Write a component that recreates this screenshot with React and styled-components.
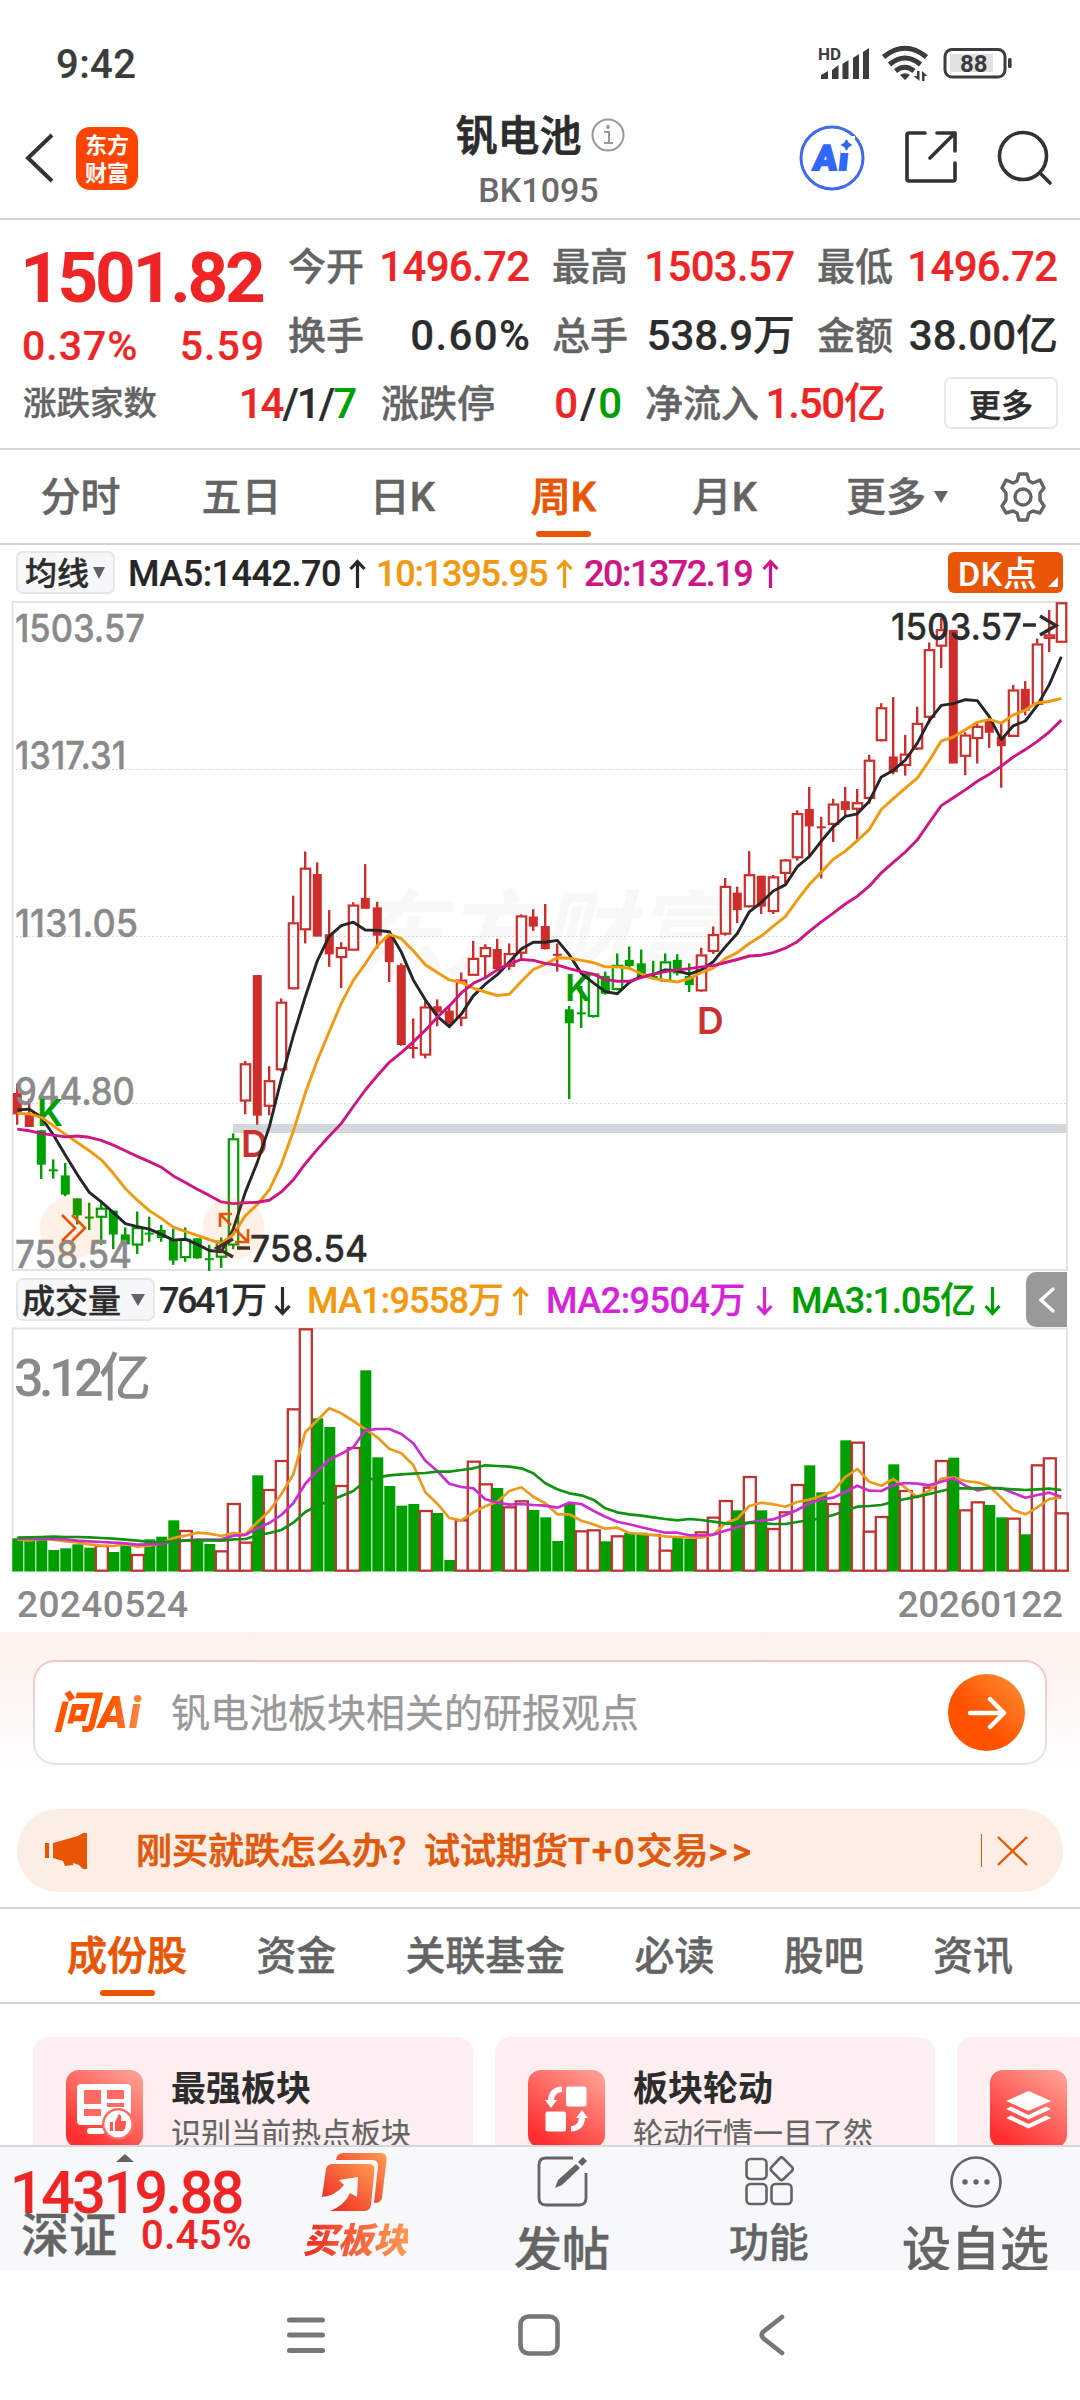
import React from 'react'
import styled, { createGlobalStyle } from 'styled-components'

const colors = {
  red: '#ef2525',
  green: '#009f00',
  ink: '#2c2c2c',
  label: '#646464',
  axis: '#8a8a8a',
  brand: '#e85504',
  ma5: '#262626',
  ma10: '#f2990f',
  ma20: '#cf1583',
  volMa2: '#d722dc',
  volMa3: '#119311',
  candle: '#cd2e2c',
  line: '#d5d5d5',
  frame: '#e3e3e3'
}

const GlobalStyle = createGlobalStyle`
  * {
    box-sizing: border-box;
  }

  body {
    margin: 0;
    background: #fff;
    color: ${colors.ink};
    font-family: Roboto, "Noto Sans CJK SC", sans-serif;
    font-weight: 500;
  }

  svg {
    display: block;
    flex: none;
  }
`

/* chart data: [high, bodyTop, bodyBottom, low, kind], upper case kind = filled body */
const CANDLES = [
  [1115, 1138, 1185, 1210, 'R'], [1150, 1185, 1214, 1214, 'R'], [1222, 1224, 1301, 1335, 'G'],
  [1290, 1314, 1316, 1334, 'G'], [1298, 1328, 1370, 1375, 'G'], [1380, 1381, 1418, 1440, 'G'],
  [1390, 1423, 1423, 1453, 'G'], [1388, 1402, 1423, 1487, 'g'], [1409, 1409, 1462, 1497, 'G'],
  [1447, 1464, 1485, 1487, 'G'], [1410, 1447, 1487, 1508, 'g'], [1422, 1460, 1460, 1480, 'G'],
  [1441, 1454, 1470, 1480, 'G'], [1450, 1477, 1522, 1533, 'G'], [1447, 1474, 1516, 1526, 'g'],
  [1471, 1473, 1517, 1519, 'G'], [1487, 1519, 1519, 1547, 'G'], [1470, 1478, 1515, 1540, 'g'],
  [1230, 1242, 1487, 1497, 'g'], [1063, 1069, 1155, 1186, 'r'], [866, 866, 1188, 1210, 'R'],
  [1075, 1108, 1167, 1188, 'r'], [919, 927, 1083, 1087, 'r'], [682, 744, 896, 898, 'r'],
  [580, 618, 760, 792, 'r'], [605, 633, 775, 776, 'R'], [715, 772, 816, 846, 'R'],
  [789, 801, 824, 895, 'r'], [697, 703, 807, 808, 'r'], [609, 688, 711, 712, 'R'],
  [696, 710, 773, 804, 'R'], [770, 778, 834, 881, 'R'], [838, 843, 1025, 1028, 'R'],
  [965, 1032, 1032, 1057, 'R'], [925, 938, 1049, 1057, 'r'], [921, 938, 950, 983, 'R'],
  [937, 948, 976, 985, 'R'], [859, 876, 964, 983, 'r'], [786, 826, 865, 865, 'r'],
  [794, 801, 822, 870, 'r'], [781, 806, 850, 853, 'R'], [792, 815, 844, 853, 'r'],
  [725, 728, 814, 830, 'r'], [713, 731, 752, 763, 'R'], [701, 753, 804, 806, 'R'],
  [792, 817, 817, 857, 'R'], [936, 945, 975, 1151, 'G'], [890, 952, 952, 987, 'G'],
  [860, 862, 960, 963, 'g'], [857, 868, 907, 910, 'G'], [815, 842, 898, 900, 'g'],
  [799, 831, 843, 848, 'G'], [806, 839, 870, 870, 'G'], [832, 868, 872, 874, 'G'],
  [815, 834, 878, 880, 'g'], [817, 831, 860, 866, 'G'], [838, 868, 887, 904, 'G'],
  [802, 818, 901, 903, 'r'], [753, 771, 810, 816, 'r'], [641, 660, 770, 774, 'r'],
  [661, 676, 714, 745, 'R'], [579, 633, 707, 709, 'r'], [636, 637, 706, 724, 'R'],
  [634, 638, 718, 724, 'r'], [597, 599, 630, 653, 'r'], [485, 492, 594, 601, 'r'],
  [431, 483, 521, 590, 'R'], [500, 523, 523, 642, 'R'], [458, 470, 517, 558, 'r'],
  [431, 465, 483, 500, 'R'], [436, 467, 482, 553, 'r'], [357, 369, 457, 470, 'r'],
  [238, 248, 324, 326, 'r'], [224, 362, 396, 402, 'R'], [311, 355, 381, 405, 'r'],
  [246, 284, 343, 346, 'r'], [98, 114, 270, 285, 'r'], [42, 68, 106, 157, 'r'],
  [70, 70, 376, 376, 'R'], [305, 311, 360, 404, 'r'], [280, 291, 319, 377, 'r'],
  [272, 280, 305, 341, 'R'], [285, 316, 336, 433, 'R'], [196, 207, 314, 316, 'r'],
  [187, 206, 254, 266, 'R'], [89, 101, 240, 241, 'r'], [23, 80, 88, 120, 'r'],
  [5, 6, 97, 97, 'r']
]

const MA5 = [
  1176, 1174, 1193, 1233, 1280, 1325, 1366, 1388, 1413, 1438, 1445, 1451, 1463, 1476, 1474, 1486,
  1500, 1503, 1450, 1366, 1297, 1215, 1105, 1005, 915, 832, 775, 751, 743, 761, 762, 765, 812, 876,
  922, 960, 984, 955, 913, 886, 864, 835, 805, 789, 789, 785, 818, 861, 883, 903, 908, 882, 867,
  864, 853, 855, 863, 853, 834, 800, 769, 719, 697, 671, 657, 615, 592, 556, 523, 499, 493, 464,
  408, 393, 369, 330, 278, 243, 239, 230, 232, 269, 322, 290, 279, 243, 195, 131
]

const MA10 = [
  1184, 1185, 1193, 1212, 1232, 1251, 1270, 1291, 1322, 1357, 1384, 1408, 1426, 1446, 1456, 1465,
  1475, 1484, 1463, 1420, 1394, 1360, 1302, 1225, 1137, 1062, 995, 930, 877, 839, 797, 771, 781,
  809, 841, 859, 876, 882, 895, 904, 912, 909, 880, 852, 840, 825, 826, 831, 836, 846, 846, 849,
  862, 873, 877, 881, 873, 859, 849, 827, 813, 792, 775, 752, 730, 692, 656, 627, 598, 579, 555,
  529, 483, 458, 434, 411, 370, 325, 316, 299, 282, 275, 284, 265, 254, 237, 234, 227
]

const MA20 = [
  1220, 1224, 1230, 1234, 1238, 1236, 1239, 1246, 1257, 1270, 1283, 1295, 1308, 1328, 1343, 1359,
  1373, 1388, 1392, 1390, 1389, 1384, 1365, 1337, 1300, 1267, 1236, 1207, 1168, 1130, 1097, 1066,
  1044, 1019, 992, 962, 936, 906, 884, 871, 853, 839, 829, 831, 838, 842, 850, 857, 863, 875, 879,
  879, 871, 863, 857, 853, 850, 846, 843, 836, 829, 821, 819, 813, 803, 788, 764, 742, 722, 701,
  683, 660, 629, 605, 581, 553, 513, 474, 456, 438, 418, 402, 383, 362, 345, 326, 304, 277
]

const VOLUMES = [
  820, 828, 825, 855, 850, 838, 848, 840, 861, 843, 867, 823, 815, 766, 795, 828, 837, 856, 714,
  830, 631, 672, 585, 430, 190, 460, 486, 660, 546, 316, 577, 663, 722, 717, 735, 744, 885, 763,
  587, 655, 669, 724, 706, 735, 757, 828, 717, 796, 793, 829, 811, 803, 803, 807, 854, 818, 822,
  799, 755, 705, 736, 633, 736, 789, 739, 657, 601, 682, 714, 526, 530, 797, 753, 598, 675, 690,
  665, 585, 578, 733, 709, 720, 757, 758, 808, 598, 577, 742
]

const VOLUME_KINDS =
  'gggggggrggrgggrggrrrgrrrrggrrggggg' +
  'rggrrrgrrgggg' +
  'rrgrggrrggrrrgrgrrrggrgrrrgrrrrgrrggrgrrr'

const VOL_MA1 = [
  824, 826, 822, 824, 829, 832, 838, 842, 843, 838, 845, 842, 835, 819, 812, 803, 806, 813, 804,
  808, 772, 738, 688, 628, 502, 466, 430, 445, 468, 492, 517, 551, 565, 600, 682, 716, 759, 766,
  742, 724, 710, 678, 667, 695, 715, 748, 748, 767, 778, 791, 788, 804, 807, 810, 814, 816, 818,
  818, 809, 775, 761, 723, 713, 718, 725, 711, 704, 692, 678, 636, 612, 650, 662, 642, 668, 697,
  677, 641, 637, 648, 652, 664, 698, 735, 748, 727, 702, 697
]

const VOL_MA2 = [
  822, 822, 821, 822, 823, 827, 829, 831, 833, 835, 839, 838, 837, 829, 826, 824, 824, 823, 812,
  810, 790, 774, 750, 715, 656, 618, 584, 566, 547, 496, 492, 492, 507, 535, 587, 618, 656, 666,
  670, 703, 713, 719, 717, 720, 722, 728, 713, 717, 737, 755, 770, 778, 787, 795, 803, 803, 811,
  811, 809, 797, 787, 772, 767, 763, 750, 735, 715, 703, 698, 681, 662, 677, 678, 661, 654, 656,
  661, 650, 640, 662, 676, 669, 669, 684, 698, 690, 683, 695
]

const VOL_MA3 = [
  818, 817, 816, 815, 816, 816, 817, 819, 821, 824, 827, 831, 831, 829, 827, 826, 826, 827, 823,
  822, 811, 804, 795, 773, 741, 722, 708, 693, 678, 648, 637, 631, 628, 626, 624, 620, 620, 615,
  610, 601, 603, 605, 610, 625, 655, 673, 685, 691, 704, 730, 742, 748, 752, 757, 762, 766, 762,
  765, 770, 775, 776, 773, 774, 777, 777, 771, 765, 760, 750, 738, 725, 723, 720, 710, 702, 695,
  687, 678, 670, 670, 670, 669, 671, 673, 675, 673, 671, 675
]

const cx = i => 17.3 + i * 12
const priceY = v => v / 2.306
const volY = v => v / 3 - 62
const points = (series, toY) => series.map((v, i) => `${cx(i)},${toY(v).toFixed(1)}`).join(' ')

const Page = styled.main`
  width: 1080px;
  height: 2400px;
  overflow: hidden;
  display: flex;
  flex-direction: column;
  background: #fff;
`

const Text = styled.span`
  padding-top: 3px;
  margin-left: ${p => p.$shift || 0}px;
  margin-right: ${p => -(p.$track || 0)}px;
  font-size: ${p => p.$size}px;
  font-weight: ${p => p.$weight || 500};
  color: ${p => p.$color || colors.ink};
  letter-spacing: ${p => p.$track || 0}px;
  -webkit-text-stroke: ${p => p.$stroke === undefined ? 0.2 : p.$stroke}px;
  line-height: 1;
  white-space: nowrap;
`

const Tint = styled.span`
  color: ${p => p.$color};
`

const Latin = styled.span`
  letter-spacing: ${p => p.$track}px;
`

const Caret = styled.i`
  width: 0;
  height: 0;
  border: solid transparent;
  border-width: 0 ${p => p.$w / 2}px;
  ${p => p.$up ? 'border-bottom' : 'border-top'}: ${p => p.$h}px solid #636363;
`

/* status bar and header */

const StatusBar = styled.div`
  height: 106px;
  padding: 20px 65px 0 56px;
  display: flex;
  align-items: center;
  justify-content: space-between;
`

const Header = styled.header`
  height: 114px;
  padding: 0 27px 8px 22px;
  display: grid;
  grid-template-columns: 1fr auto 1fr;
  align-items: center;
  border-bottom: 2px solid ${colors.line};
`

const HeaderSide = styled.div`
  display: flex;
  align-items: center;
  gap: ${p => p.$gap}px;
  justify-content: ${p => p.$end ? 'flex-end' : 'flex-start'};
`

const Logo = styled.div`
  width: 62px;
  height: 63px;
  border-radius: 14px;
  background: #ff4400;
  color: #fff;
  font: 700 22px/28px "Noto Sans CJK SC", sans-serif;
  text-align: center;
  padding: 2px 8px;
`

const TitleBlock = styled.div`
  display: flex;
  flex-direction: column;
  align-items: center;
  gap: 12px;
  padding-top: 3px;
`

const TitleLine = styled.div`
  display: flex;
  align-items: center;
  gap: 9px;
  padding-left: 5px;
`

/* quote */

const Quote = styled.section`
  height: 230px;
  padding: 11px 22px 0 24px;
  border-bottom: 2px solid ${colors.line};
`

const QuoteGrid = styled.div`
  display: grid;
  grid-template-columns: 242px 241px 242px 240px;
  column-gap: 23px;
`

const PriceBlock = styled.div`
  grid-row: span 2;
  width: 240px;
  height: 138px;
  display: grid;
  grid-template-columns: 240px;
  grid-template-rows: 89px 49px;
  align-items: center;
`

const Spread = styled.div`
  display: flex;
  align-items: center;
  justify-content: space-between;
  height: ${p => p.$h || 69}px;
  width: ${p => p.$w ? p.$w + 'px' : 'auto'};
`

const BreadthRow = styled.div`
  display: flex;
  align-items: center;
  gap: 25px;
  height: 67px;
`

const MoreButton = styled.button`
  width: 114px;
  height: 52px;
  margin-left: auto;
  padding: 0;
  border: 2px solid #e6e8e9;
  border-radius: 7px;
  background: #fff;
  font: 500 32px/1 "Noto Sans CJK SC", sans-serif;
  color: ${colors.ink};
  -webkit-text-stroke: 0.5px;
`

/* tabs */

const PeriodTabs = styled.nav`
  height: 95px;
  display: flex;
  align-items: center;
  border-bottom: 2px solid ${colors.line};
`

const Tab = styled.div`
  position: relative;
  width: ${p => p.$w ? p.$w + 'px' : 'auto'};
  height: 93px;
  padding-top: 3px;
  display: flex;
  align-items: center;
  justify-content: center;
  font-size: 40px;
  line-height: 1;
  color: ${p => p.$active ? colors.brand : colors.label};
  -webkit-text-stroke: ${p => p.$active ? 0.8 : 0.4}px;

  &::after {
    content: '';
    display: ${p => p.$active ? 'block' : 'none'};
    position: absolute;
    bottom: 6px;
    width: 55px;
    height: 6px;
    border-radius: 3px;
    background: ${colors.brand};
  }
`

const MoreTab = styled.div`
  display: flex;
  align-items: center;
  gap: 8px;
  margin: 0 51px 0 41px;
`

/* indicator rows */

const IndicatorRow = styled.div`
  height: 55px;
  display: flex;
  align-items: center;
  padding: 0 ${p => p.$right}px 0 ${p => p.$left}px;
`

const Chip = styled.div`
  width: ${p => p.$w}px;
  height: 43px;
  display: flex;
  align-items: center;
  justify-content: space-between;
  padding: 0 8px 0 ${p => p.$pad}px;
  margin-right: ${p => p.$gap}px;
  border: 2px solid #e5e7ea;
  border-radius: 7px;
  background: #f6f7f9;
`

const Reading = styled.div`
  display: flex;
  align-items: center;
  justify-content: space-between;
  width: ${p => p.$w}px;
  margin-right: ${p => p.$gap}px;
`

const DkButton = styled.div`
  position: relative;
  width: 115px;
  height: 41px;
  margin-left: auto;
  padding-left: 11px;
  display: flex;
  align-items: center;
  border-radius: 6px;
  background: ${colors.brand};

  &::after {
    content: '';
    position: absolute;
    right: 5px;
    bottom: 6px;
    border-left: 10px solid transparent;
    border-bottom: 10px solid #fff;
  }
`

const Collapse = styled.div`
  width: 41px;
  height: 55px;
  margin-left: auto;
  display: flex;
  align-items: center;
  justify-content: center;
  border-radius: 10px 0 0 10px;
  background: #999;
`

const DateRow = styled.div`
  height: 59px;
  display: flex;
  align-items: center;
  justify-content: space-between;
  padding: 0 17px;
`

/* ask box and banner */

const AskSection = styled.section`
  height: 175px;
  padding: 28px 33px 0;
  background: linear-gradient(#fef1ec, #fff 86%);
`

const AskBox = styled.div`
  height: 105px;
  display: flex;
  align-items: center;
  padding: 0 20px 0 18px;
  border: 2px solid transparent;
  border-radius: 22px;
  background:
    linear-gradient(#fff, #fff) padding-box,
    linear-gradient(#f7c5bb, #dfe6ee) border-box;
`

const AskLogo = styled.div`
  width: 98px;
  margin-right: 20px;
  font: italic 900 44px/50px Roboto, "Noto Sans CJK SC", sans-serif;
  letter-spacing: 1.5px;
  white-space: nowrap;
  color: transparent;
  background: linear-gradient(100deg, #ff5500 55%, #ff9a60);
  background-clip: text;
`

const SendButton = styled.div`
  width: 77px;
  height: 77px;
  margin-left: auto;
  display: flex;
  align-items: center;
  justify-content: center;
  border-radius: 50%;
  background: linear-gradient(45deg, #ff5200 40%, #ff9036);
`

const Banner = styled.div`
  height: 83px;
  margin: 2px 17px 15px;
  padding: 0 35px 0 28px;
  display: flex;
  align-items: center;
  border-radius: 41px;
  background: #fceee5;
`

const Divider = styled.i`
  width: 1px;
  height: 33px;
  margin: 0 15px 0 auto;
  background: ${colors.brand};
`

/* content tabs and cards */

const SectionTabs = styled.nav`
  height: 97px;
  display: flex;
  justify-content: space-between;
  padding: 0 67px;
  border-top: 2px solid ${colors.line};
  border-bottom: 2px solid ${colors.line};
`

const CardStrip = styled.section`
  height: 141px;
  overflow: hidden;
  display: flex;
  gap: 22px;
  padding: 33px 0 0 33px;
`

const Card = styled.article`
  flex: none;
  width: 440px;
  height: 150px;
  display: flex;
  gap: 28px;
  padding: 32px 33px;
  border-radius: 16px;
  background: #fdeff0;
`

const CardIcon = styled.div`
  width: 77px;
  height: 78px;
  margin-top: 1px;
  border-radius: 13px;
  background: linear-gradient(35deg, #ff2f2f 15%, #ff9a8e 90%);
`

const CardText = styled.div`
  display: flex;
  flex-direction: column;
  gap: 9px;
`

/* bottom bars */

const BottomBar = styled.footer`
  height: 125px;
  overflow: hidden;
  display: flex;
  padding-right: 1px;
  border-top: 2px solid #d6d8dd;
  background: #f6f8fa;
`

const IndexTicker = styled.div`
  width: 252px;
  padding: 7px 0 0 10px;
  display: flex;
  flex-direction: column;
`

const IndexRow = styled.div`
  height: ${p => p.$h}px;
  display: flex;
  align-items: center;
  gap: 24px;
  padding-left: ${p => p.$pad || 0}px;
`

const Action = styled.div`
  flex: 1;
  display: flex;
  flex-direction: column;
  align-items: center;
  padding-top: 5px;
`

const ActionLabel = styled.span`
  flex: none;
  font-size: ${p => p.$size}px;
  line-height: ${p => p.$lh}px;
  color: ${colors.label};
  -webkit-text-stroke: 0.4px;
  white-space: nowrap;
`

const BuyLabel = styled(ActionLabel)`
  font-weight: 900;
  font-style: italic;
  color: transparent;
  background: linear-gradient(90deg, #ee2b24, #ff9a52);
  background-clip: text;
  -webkit-text-stroke: 0;
`

const SystemNav = styled.div`
  height: 130px;
  display: flex;
  align-items: center;
  padding-left: 287px;
`

const HomeIcon = styled.svg`
  margin: 0 199px 0 193px;
`

const StatusIcons = () => (
  <svg width="200" height="40" viewBox="815 43 200 40" fill="#3c3c3c">
    <text x="818" y="59.500" fontSize="17" fontWeight="700">HD</text>
    <path d="M821 79V75L828 71V79ZM832 79V70L838.500 65V79ZM842.500 79V64L848.500 60V79ZM853 79V58L859 54V79ZM863 79V52L869 48V79Z" />
    <g fill="none" stroke="#3c3c3c" strokeWidth="5">
      <path d="M883.500 57Q905 39.500 926.500 57" />
      <path d="M889.500 64.500Q905 51.500 920.500 64.500" />
      <path d="M895.500 71Q905 63.500 914 71" />
    </g>
    <path d="M900 75Q905 71.500 910 75L905 80ZM917 71H919.500V81L913.500 76H917ZM922 81H924.500V76H927.500L922 71Z" />
    <rect x="950" y="54" width="43" height="18" fill="#e2e2e2" />
    <rect x="945" y="49.500" width="60" height="27.500" rx="7" fill="none" stroke="#3c3c3c" strokeWidth="3" />
    <rect x="1008" y="58" width="3.600" height="10" rx="1.500" />
    <text x="960" y="71.500" fontSize="24" fontWeight="700">88</text>
  </svg>
)

const AiIcon = () => (
  <svg width="66" height="66" viewBox="0 0 66 66">
    <circle cx="33" cy="33" r="31" fill="none" stroke="#3f69f0" strokeWidth="3" />
    <g transform="skewX(-6)" fill="#3166ff">
      <text x="18" y="45" fontSize="35" fontWeight="900" stroke="#3166ff" strokeWidth="2" textLength="35">Ai</text>
    </g>
    <rect x="42" y="11" width="14" height="17" fill="#fff" />
    <path d="M47.500 15Q48.500 19 52.500 20Q48.500 21 47.500 25Q46.500 21 42.500 20Q46.500 19 47.500 15Z" fill="#3166ff" stroke="#3166ff" strokeWidth="1.500" />
  </svg>
)

const Arrow = ({ color, down }) => (
  <svg width="17" height="32" viewBox="0 -2 17 32" fill="none" stroke={color} strokeWidth="3.200">
    <path d={down ? 'M8.500 1V28M1.500 20L8.500 27.500L15.500 20' : 'M8.500 29V2M1.500 10L8.500 2.500L15.500 10'} />
  </svg>
)

const Candle = ({ i, bar }) => {
  const [high, top, bottom, low, kind] = bar
  const filled = kind === kind.toUpperCase()
  const color = kind.toLowerCase() === 'g' ? colors.green : colors.candle
  const x = cx(i)
  const y1 = priceY(top)
  const y2 = priceY(bottom)

  return (
    <g fill={color}>
      <rect x={x - 1.3} y={priceY(high)} width="2.400" height={y1 - priceY(high)} />
      <rect x={x - 1.3} y={y2} width="2.400" height={Math.max(priceY(low) - y2, 0)} />
      {filled
        ? <rect x={x - 4.5} y={y1 - 0.5} width="9" height={Math.max(y2 - y1 + 1, 2)} />
        : <rect x={x - 4.5} y={y1 + 0.7} width="9.400" height={Math.max(y2 - y1 - 1, 1)} fill="none" stroke={color} strokeWidth="2.200" />}
    </g>
  )
}

const PRICE_LABELS = [
  ['1503.57', 641.5, 130],
  ['1317.31', 769, 111],
  ['1131.05', 937, 123],
  ['944.80', 1104.5, 120],
  ['758.54', 1267.5, 117]
]

const PriceChart = () => (
  <svg width="1080" height="672" fontFamily='Inter, "Noto Sans CJK SC", sans-serif' fontWeight="500">
    <text x="350" y="369" fontSize="94" fontWeight="700" fontStyle="italic" fill="#f8f8f8" fontFamily='"Noto Sans CJK SC", sans-serif'>东方财富</text>
    <g stroke="#dadada" strokeDasharray="2 2">
      <path d="M12 169.500H1067M12 336.500H1067M12 503.500H1067" />
    </g>
    <rect x="12.500" y="2" width="1054.500" height="668" fill="none" stroke={colors.frame} strokeWidth="2" />
    <rect x="233" y="524" width="834" height="9" fill="#d3d7db" />
    {CANDLES.map((bar, i) => <Candle key={i} i={i} bar={bar} />)}
    <g fontSize="38" fill={colors.axis} stroke={colors.axis} strokeWidth="0.400">
      {PRICE_LABELS.map(([label, y, w]) => (
        <text key={label} x="15" y={y - 600} textLength={w} lengthAdjust="spacingAndGlyphs">{label}</text>
      ))}
    </g>
    <g fontSize="37" fontWeight="600">
      <text x="37" y="526" fill={colors.green}>K</text>
      <text x="565" y="401" fill={colors.green}>K</text>
      <text x="241" y="556.500" fill="#c93030">D</text>
      <text x="697" y="434" fill="#c93030">D</text>
    </g>
    <g fill="none" strokeWidth="2.900" strokeLinejoin="round">
      <polyline points={points(MA5, priceY)} stroke={colors.ma5} />
      <polyline points={points(MA10, priceY)} stroke={colors.ma10} />
      <polyline points={points(MA20, priceY)} stroke={colors.ma20} />
    </g>
    <g fontSize="37" fill={colors.ink} stroke={colors.ink} strokeWidth="0.300">
      <text x="891" y="39.500" textLength="131" lengthAdjust="spacingAndGlyphs">1503.57</text>
      <text x="250" y="661.500" textLength="118" lengthAdjust="spacingAndGlyphs">758.54</text>
    </g>
    <g fill="none" stroke={colors.ink} strokeWidth="3.400">
      <path d="M1023 25H1036M1040 16L1056 25.500L1040 35" />
      <path d="M237 648H250M233 639L217 648L233 657" />
    </g>
    <circle cx="71" cy="628" r="31" fill="#ff6a20" fillOpacity="0.100" />
    <circle cx="233.500" cy="628" r="31" fill="#ff6a20" fillOpacity="0.100" />
    <g fill="none" stroke={colors.brand} strokeWidth="2.600">
      <path d="M62 615L75 628L62 641M72 615L85 628L72 641" />
      <path d="M220 627V614H232M220 614L231 625M235 642H248V629M248 642L235 629" />
    </g>
  </svg>
)

const VolumeChart = () => (
  <svg width="1080" height="246" fontFamily='Roboto, "Noto Sans CJK SC", sans-serif' fontWeight="500">
    <path d="M12.500 245V1.500H1067V245" fill="none" stroke={colors.frame} strokeWidth="2" />
    <text x="14" y="68.500" fontSize="52" fill={colors.axis} textLength="137">3.12亿</text>
    {VOLUMES.map((v, i) => VOLUME_KINDS[i] === 'g'
      ? <rect key={i} x={cx(i) - 5} y={volY(v)} width="11" height={244.5 - volY(v)} fill={colors.green} />
      : <rect key={i} x={cx(i) - 5.5} y={volY(v) + 1} width="12" height={242.7 - volY(v)} fill="#fff" stroke="#bf3431" strokeWidth="2.300" />)}
    <g fill="none" strokeWidth="2.700" strokeLinejoin="round">
      <polyline points={points(VOL_MA1, volY)} stroke="#ec9a1c" />
      <polyline points={points(VOL_MA2, volY)} stroke="#cc2dcc" />
      <polyline points={points(VOL_MA3, volY)} stroke={colors.volMa3} />
    </g>
  </svg>
)

const STATS = [
  ['今开', '1496.72', colors.red, -0.7],
  ['最高', '1503.57', colors.red, -0.7],
  ['最低', '1496.72', colors.red, -0.7],
  ['换手', '0.60%', colors.ink, 1.4],
  ['总手', '538.9万', colors.ink, -0.2],
  ['金额', '38.00亿', colors.ink, 0]
]

const PERIODS = ['分时', '五日', '日K', '周K', '月K']
const SECTIONS = ['成份股', '资金', '关联基金', '必读', '股吧', '资讯']

const StrongIcon = () => (
  <svg width="77" height="78" viewBox="0 0 77 78">
    <rect x="11" y="14" width="54" height="41" rx="4" fill="#fff" />
    <path d="M18 20H35V34H18ZM41 20H58V29H41ZM18 39H35V46H18ZM41 33H58V37H41Z" fill="#ff6a62" />
    <rect x="21" y="58" width="18" height="6" rx="3" fill="#fff" />
    <circle cx="52" cy="54" r="16" fill="#ff6a62" />
    <circle cx="52" cy="54" r="13.500" fill="#fff" />
    <path d="M44 52H47V61H44ZM49 52L53 44Q56 45 55 51H60Q60 60 57 61H49Z" fill="#ff5650" />
  </svg>
)

const RotateIcon = () => (
  <svg width="77" height="78" viewBox="0 0 77 78" fill="#fff">
    <rect x="38" y="16.500" width="20.500" height="20" rx="2" />
    <rect x="17.500" y="41.500" width="20.500" height="20" rx="2" />
    <path d="M34 16.500V22Q27 22 26 30H29L23 38L17 30H20Q21 17 34 16.500Z" />
    <path d="M43 61.500V56Q50 56 51 48H48L54 40L60 48H57Q56 61 43 61.500Z" />
  </svg>
)

const LayersIcon = () => (
  <svg width="77" height="78" viewBox="0 0 77 78" fill="#fff">
    <path d="M38.500 21L61 31L38.500 41L16 31Z" />
    <path d="M16 39L21 36.500L38.500 45L56 36.500L61 39L38.500 49.500Z" />
    <path d="M16 48L21 45.500L38.500 54L56 45.500L61 48L38.500 58.500Z" />
  </svg>
)

const CARDS = [
  ['最强板块', '识别当前热点板块', StrongIcon],
  ['板块轮动', '轮动行情一目了然', RotateIcon],
  ['', '', LayersIcon]
]

const BuyIcon = () => (
  <svg width="68" height="60" viewBox="0 0 68 60">
    <defs>
      <linearGradient id="buy" x1="0" y1="1" x2="1" y2="0">
        <stop offset="0.100" stopColor="#ee2a24" />
        <stop offset="1" stopColor="#ff9e52" />
      </linearGradient>
    </defs>
    <path d="M15 8Q16 1 22 1H60Q66 1 65.500 8L61 46Q60 51 53 51L57 14Q57 8 52 8Z" fill="url(#buy)" />
    <path d="M5 17Q6 12 12 12H48Q54 12 53.500 18L50 53Q49 59 43 59H9Q24 53 29 41L36 45L37 25L18 28L23 33Q14 44 1 45Z" fill="url(#buy)" />
  </svg>
)

const App = () => (
  <Page>
    <GlobalStyle />
    <StatusBar>
      <Text $size={40} $color="#3c3c3c" $track={0.4}>9:42</Text>
      <StatusIcons />
    </StatusBar>

    <Header>
      <HeaderSide $gap={20}>
        <svg width="34" height="54" viewBox="0 0 34 54" fill="none" stroke="#333" strokeWidth="4">
          <path d="M30 4L6 27L30 50" />
        </svg>
        <Logo>东方财富</Logo>
      </HeaderSide>
      <TitleBlock>
        <TitleLine>
          <Text $size={42} $stroke={0.8}>钒电池</Text>
          <svg width="34" height="34" viewBox="0 0 34 34" fill="none" stroke="#999" strokeWidth="2">
            <circle cx="17" cy="17" r="15.500" />
            <path d="M13 14H18V25M13 25H22" />
            <circle cx="17" cy="9" r="1" />
          </svg>
        </TitleLine>
        <Text $size={34} $color="#6a6a6a" $shift={2} $stroke={0}>BK1095</Text>
      </TitleBlock>
      <HeaderSide $gap={40} $end>
        <AiIcon />
        <svg width="52" height="54" viewBox="0 0 52 54" fill="none" stroke="#333" strokeWidth="3.600" strokeLinecap="round" strokeLinejoin="round">
          <path d="M20 2H4Q2 2 2 4V48Q2 50 4 50H48Q50 50 50 48V32M32 2H50V20M50 2L25 27" />
        </svg>
        <svg width="56" height="56" viewBox="0 0 56 56" fill="none" stroke="#333" strokeWidth="3.600" strokeLinecap="round">
          <circle cx="26" cy="26" r="23.500" />
          <path d="M43 43L53 53" />
        </svg>
      </HeaderSide>
    </Header>

    <Quote>
      <QuoteGrid>
        <PriceBlock>
          <Text $size={71} $weight={700} $color={colors.red} $track={-3.2} $shift={-4} $stroke={0}>1501.82</Text>
          <Spread $h={49}>
            <Text $size={41} $color={colors.red} $track={1} $shift={-2}>0.37%</Text>
            <Text $size={41} $color={colors.red} $track={1}>5.59</Text>
          </Spread>
        </PriceBlock>
        {STATS.map(([label, value, color, track]) => (
          <Spread key={label}>
            <Text $size={38} $color={colors.label} $shift={-1} $stroke={0.4}>{label}</Text>
            <Text $size={42} $color={color} $track={track}>{value}</Text>
          </Spread>
        ))}
      </QuoteGrid>
      <BreadthRow>
        <Spread $w={333}>
          <Text $size={33.5} $color={colors.label} $shift={-1} $stroke={0.4}>涨跌家数</Text>
          <Text $size={42} $track={-2}>
            <Tint $color={colors.red}>14</Tint>/1/<Tint $color={colors.green}>7</Tint>
          </Text>
        </Spread>
        <Spread $w={240}>
          <Text $size={38} $color={colors.label} $shift={-1} $stroke={0.4}>涨跌停</Text>
          <Text $size={42} $track={1.8}>
            <Tint $color={colors.red}>0</Tint>/<Tint $color={colors.green}>0</Tint>
          </Text>
        </Spread>
        <Spread $w={239}>
          <Text $size={38} $color={colors.label} $shift={-2} $stroke={0.4}>净流入</Text>
          <Text $size={42} $color={colors.red} $track={-1.2}>1.50亿</Text>
        </Spread>
        <MoreButton>更多</MoreButton>
      </BreadthRow>
    </Quote>

    <PeriodTabs>
      {PERIODS.map(name => <Tab key={name} $w={161} $active={name === '周K'}>{name}</Tab>)}
      <MoreTab>
        <Text $size={40} $color={colors.label} $stroke={0.4}>更多</Text>
        <Caret $w={14} $h={12} />
      </MoreTab>
      <svg width="48" height="50" viewBox="0 0 48 50" fill="none" stroke={colors.label} strokeWidth="3.400" strokeLinejoin="round">
        <path d="M20 2H28L30 9L34 11L41 8L45 16L41 21V28L45 34L41 41L34 39L30 41L28 48H20L18 41L14 39L7 41L3 34L7 28V21L3 16L7 8L14 11L18 9Z" />
        <circle cx="24" cy="25" r="8" />
      </svg>
    </PeriodTabs>

    <IndicatorRow $left={16} $right={17}>
      <Chip $w={99} $pad={7} $gap={13}>
        <Text $size={32} $stroke={0.4}>均线</Text>
        <Caret $w={13} $h={12} />
      </Chip>
      <Reading $w={238} $gap={10}>
        <Text $size={36} $color={colors.ma5} $track={-0.5}>MA5:1442.70</Text>
        <Arrow color={colors.ma5} />
      </Reading>
      <Reading $w={197} $gap={11}>
        <Text $size={36} $color={colors.ma10} $track={-1.2}>10:1395.95</Text>
        <Arrow color={colors.ma10} />
      </Reading>
      <Reading $w={195} $gap={0}>
        <Text $size={36} $color={colors.ma20} $track={-1.5}>20:1372.19</Text>
        <Arrow color={colors.ma20} />
      </Reading>
      <DkButton>
        <Text $size={34} $color="#fff" $shift={-1} $track={0.6}>DK点</Text>
      </DkButton>
    </IndicatorRow>

    <PriceChart />

    <IndicatorRow $left={16} $right={13}>
      <Chip $w={139} $pad={4} $gap={4}>
        <Text $size={33} $stroke={0.4}>成交量</Text>
        <Caret $w={14} $h={12} />
      </Chip>
      <Reading $w={132} $gap={16}>
        <Text $size={36} $track={-2.4}>7641万</Text>
        <Arrow color={colors.ink} down />
      </Reading>
      <Reading $w={222} $gap={17}>
        <Text $size={36} $color={colors.ma10} $track={-0.8}>MA1:9558万</Text>
        <Arrow color={colors.ma10} />
      </Reading>
      <Reading $w={227} $gap={18}>
        <Text $size={36} $color={colors.volMa2} $track={-0.5}>MA2:9504万</Text>
        <Arrow color={colors.volMa2} down />
      </Reading>
      <Reading $w={210} $gap={0}>
        <Text $size={36} $color={colors.green} $track={-1}>MA3:1.05亿</Text>
        <Arrow color={colors.green} down />
      </Reading>
      <Collapse>
        <svg width="18" height="28" viewBox="0 0 18 28" fill="none" stroke="#fff" strokeWidth="3.400" strokeLinecap="round">
          <path d="M15 3L3 14L15 25" />
        </svg>
      </Collapse>
    </IndicatorRow>

    <VolumeChart />

    <DateRow>
      <Text $size={37} $color={colors.axis} $track={0.4} $stroke={0}>20240524</Text>
      <Text $size={37} $color={colors.axis} $track={-0.4} $stroke={0}>20260122</Text>
    </DateRow>

    <AskSection>
      <AskBox>
        <AskLogo>问Ai</AskLogo>
        <Text $size={39} $weight={400} $color="#999" $stroke={0.3}>钒电池板块相关的研报观点</Text>
        <SendButton>
          <svg width="40" height="36" viewBox="0 0 40 36" fill="none" stroke="#fff" strokeWidth="4.400" strokeLinecap="round" strokeLinejoin="round">
            <path d="M3 18H36M23 4L37 18L23 32" />
          </svg>
        </SendButton>
      </AskBox>
    </AskSection>

    <Banner>
      <svg width="42" height="38" viewBox="0 0 42 38" fill={colors.brand}>
        <path d="M0 11H4V26H0ZM8 11L33 4L38 1H42V37H38L34 33L28 31V33L20 34L18 29L8 26Z" />
      </svg>
      <Text $size={36} $color="#df590e" $shift={49} $stroke={0.7}>
        刚买就跌怎么办？试试期货<Latin $track={2}>T+0</Latin>交易<Latin $track={5}>&gt;&gt;</Latin>
      </Text>
      <Divider />
      <svg width="31" height="30" viewBox="0 0 31 30" stroke={colors.brand} strokeWidth="2.400">
        <path d="M1 1L30 29M30 1L1 29" />
      </svg>
    </Banner>

    <SectionTabs>
      {SECTIONS.map((name, i) => <Tab key={name} $active={i === 0}>{name}</Tab>)}
    </SectionTabs>

    <CardStrip>
      {CARDS.map(([title, note, Icon], i) => (
        <Card key={i}>
          <CardIcon><Icon /></CardIcon>
          <CardText>
            <Text $size={35} $weight={700} $stroke={0}>{title}</Text>
            <Text $size={30} $weight={400} $color={colors.label} $stroke={0.2}>{note}</Text>
          </CardText>
        </Card>
      ))}
    </CardStrip>

    <BottomBar>
      <IndexTicker>
        <IndexRow $h={8} $pad={106}><Caret $w={19} $h={8} $up /></IndexRow>
        <IndexRow $h={57}><Text $size={59} $color={colors.red} $track={-2.4}>14319.88</Text></IndexRow>
        <IndexRow $h={30} $pad={11}>
          <Text $size={48} $color={colors.label} $stroke={0.4}>深证</Text>
          <Text $size={40} $color={colors.red} $track={0.4}>0.45%</Text>
        </IndexRow>
      </IndexTicker>
      <Action>
        <BuyIcon />
        <BuyLabel $size={35} $lh={60}>买板块</BuyLabel>
      </Action>
      <Action>
        <svg width="54" height="60" viewBox="0 0 54 60" fill="none" stroke={colors.label} strokeWidth="2.800">
          <path d="M38 6H11Q4 6 4 13V46Q4 53 11 53H44Q51 53 51 46V21" />
          <path d="M20 36L23 28L41 12L45 16L27 33Z" fill={colors.label} stroke="none" />
          <path d="M43 10L48 5L52 9L47 14Z" fill={colors.label} stroke="none" />
        </svg>
        <ActionLabel $size={48} $lh={77}>发帖</ActionLabel>
      </Action>
      <Action>
        <svg width="50" height="60" viewBox="0 0 50 60" fill="none" stroke={colors.label} strokeWidth="2.600">
          <rect x="2.500" y="7" width="20" height="20" rx="4" />
          <rect x="2.500" y="32" width="20" height="20" rx="4" />
          <rect x="27.500" y="32" width="20" height="20" rx="4" />
          <path d="M35.500 6.500Q37.500 4.500 39.500 6.500L48 15Q49.500 17 48 19L39.500 27Q37.500 29 35.500 27L27.500 19Q26 17 27.500 15Z" />
        </svg>
        <ActionLabel $size={40} $lh={64}>功能</ActionLabel>
      </Action>
      <Action>
        <svg width="54" height="60" viewBox="0 0 54 60" fill={colors.label}>
          <circle cx="27" cy="30" r="24.500" fill="none" stroke={colors.label} strokeWidth="2.600" />
          <circle cx="16" cy="30" r="2.700" />
          <circle cx="27" cy="30" r="2.700" />
          <circle cx="38" cy="30" r="2.700" />
        </svg>
        <ActionLabel $size={49} $lh={77}>设自选</ActionLabel>
      </Action>
    </BottomBar>

    <SystemNav>
      <svg width="38" height="38" viewBox="0 0 38 38" stroke="#777" strokeWidth="5" strokeLinecap="round">
        <path d="M2.500 4H35.500M2.500 19H35.500M2.500 34.500H35.500" />
      </svg>
      <HomeIcon width="42" height="42" viewBox="0 0 42 42" fill="none" stroke="#777" strokeWidth="4.600">
        <rect x="2.500" y="2.500" width="37" height="37" rx="8" />
      </HomeIcon>
      <svg width="26" height="42" viewBox="0 0 26 42" fill="none" stroke="#777" strokeWidth="4.600" strokeLinecap="round">
        <path d="M23 3L4 18Q1.500 21 4 24L23 39" />
      </svg>
    </SystemNav>
  </Page>
)

export default App
